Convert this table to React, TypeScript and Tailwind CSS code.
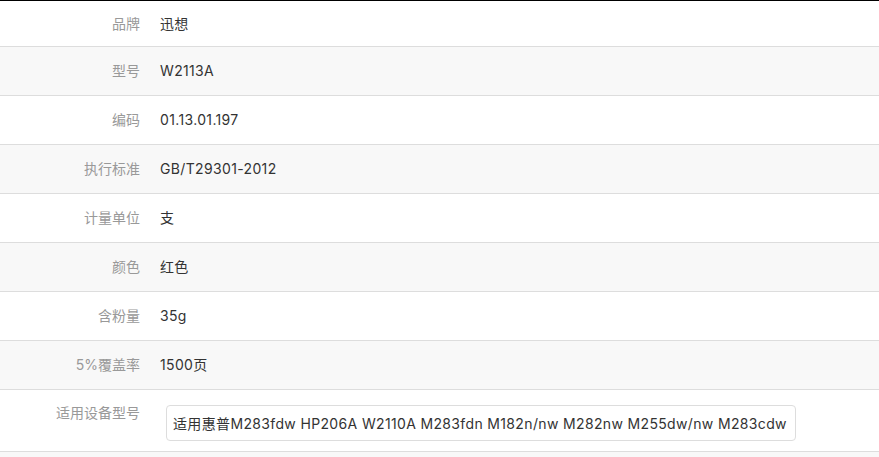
const rows: {label: string, value: string}[] = [
  {label: "品牌", value: "迅想"},
  {label: "型号", value: "W2113A"},
  {label: "编码", value: "01.13.01.197"},
  {label: "执行标准", value: "GB/T29301-2012"},
  {label: "计量单位", value: "支"},
  {label: "颜色", value: "红色"},
  {label: "含粉量", value: "35g"},
  {label: "5%覆盖率", value: "1500页"},
]

const font = {fontFamily: '"Microsoft YaHei", Inter, "Noto Sans CJK SC", sans-serif'}

export default function App() {
  return (
    <div className="w-[879px] h-[457px] bg-white overflow-hidden text-sm" style={font}>
      <div className="h-px bg-black" />
      {rows.map((r, i) => (
        <div key={i} className={`flex items-center border-b border-[#dddddd] ${i === 0 ? "h-[46px]" : "h-[49px]"} ${i % 2 === 1 ? "bg-[#f8f8f8]" : "bg-white"}`}>
          <div className="w-[140px] text-right text-[#999999]">{r.label}</div>
          <div className="pl-5 text-[#333333] tracking-[0.35px]">{r.value}</div>
        </div>
      ))}
      <div className="flex items-start h-[62px] border-b border-[#dddddd] bg-white">
        <div className="w-[140px] text-right text-[#999999] pt-[13px]">适用设备型号</div>
        <div className="pl-[26px] pt-[15px]">
          <input
            readOnly
            value="适用惠普M283fdw HP206A W2110A M283fdn M182n/nw M282nw M255dw/nw M283cdw"
            className="w-[630px] h-[36px] px-[6px] border border-[#dddddd] rounded text-sm text-[#333333] tracking-[0.35px] outline-none"
            style={font}
          />
        </div>
      </div>
      <div className="h-[20px] bg-[#f8f8f8]" />
    </div>
  )
}
